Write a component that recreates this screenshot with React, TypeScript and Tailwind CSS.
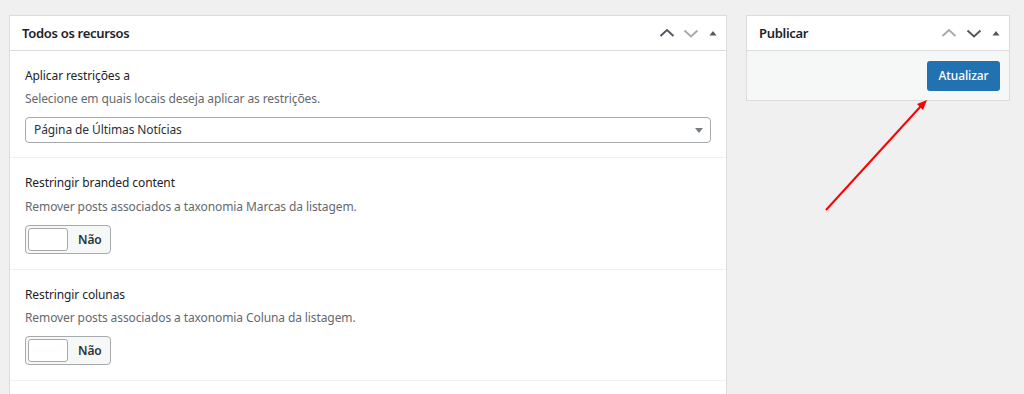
import React from "react";

const font = { fontFamily: '"Noto Sans", "Open Sans", Arial, sans-serif' };

function ChevUp({ color }: { color: string }) {
  return (
    <svg width="16" height="16" viewBox="0 0 16 16" className="block">
      <polyline points="1.5,11 8,5 14.5,11" fill="none" stroke={color} strokeWidth="1.9" />
    </svg>
  );
}
function ChevDown({ color }: { color: string }) {
  return (
    <svg width="16" height="16" viewBox="0 0 16 16" className="block">
      <polyline points="1.5,5.5 8,11.5 14.5,5.5" fill="none" stroke={color} strokeWidth="1.9" />
    </svg>
  );
}
function Tri() {
  return (
    <svg width="10" height="10" viewBox="0 0 10 10" className="block">
      <polygon points="1.5,7.5 5,3 8.5,7.5" fill="#50575e" />
    </svg>
  );
}

function Toggle() {
  return (
    <div className="mt-[8px] flex h-[29px] w-[86px] items-center rounded-[4px] border border-[#a7aaad] bg-[#f6f7f7] pl-[2px]">
      <div className="h-[23px] w-[40px] rounded-[3px] border border-[#a7aaad] bg-white" />
      <span className="ml-[10px] text-[12px] font-semibold text-[#2c3338]">Não</span>
    </div>
  );
}

export default function App() {
  return (
    <div className="relative h-[394px] w-[1024px] overflow-hidden bg-[#f0f0f1] tracking-[-0.1px]" style={font}>
      <div className="flex items-start pl-[9px] pt-[15px]">
        {/* Left panel */}
        <div className="w-[718px] border border-[#dcdcde] bg-white">
          <div className="flex h-[35px] items-center border-b border-[#dcdcde] pl-[12px] pr-[6px]">
            <h2 className="flex-1 pt-[2px] text-[13px] font-semibold tracking-[-0.3px] text-[#1d2327]">Todos os recursos</h2>
            <div className="flex items-center">
              <span className="mr-[8px]"><ChevUp color="#50575e" /></span>
              <span className="mr-[9px]"><ChevDown color="#a7aaad" /></span>
              <span className="mr-[2px]"><Tri /></span>
            </div>
          </div>
          <div className="border-b border-[#f0f0f1] px-[15px] pb-[14px] pt-[15px]">
            <div className="text-[12px] leading-[20px] text-[#1d2327]">Aplicar restrições a</div>
            <div className="mt-[3px] text-[12px] leading-[20px] text-[#646970]">Selecione em quais locais deseja aplicar as restrições.</div>
            <div className="mt-[8px] flex h-[26px] items-center rounded-[4px] border border-[#a7aaad] bg-white pl-[8px] pr-[6px]">
              <span className="flex-1 text-[12px] text-[#2c3338]">Página de Últimas Notícias</span>
              <svg width="10" height="10" viewBox="0 0 10 10">
                <polygon points="1,3 9,3 5,8" fill="#787c82" />
              </svg>
            </div>
          </div>
          <div className="border-b border-[#f0f0f1] px-[15px] pb-[15px] pt-[15px]">
            <div className="text-[12px] leading-[20px] text-[#1d2327]">Restringir branded content</div>
            <div className="mt-[4px] text-[12px] leading-[20px] text-[#646970]">Remover posts associados a taxonomia Marcas da listagem.</div>
            <Toggle />
          </div>
          <div className="border-b border-[#f0f0f1] px-[15px] pb-[15px] pt-[15px]">
            <div className="text-[12px] leading-[20px] text-[#1d2327]">Restringir colunas</div>
            <div className="mt-[3px] text-[12px] leading-[20px] text-[#646970]">Remover posts associados a taxonomia Coluna da listagem.</div>
            <Toggle />
          </div>
          <div className="h-[60px]" />
        </div>

        {/* Right panel */}
        <div className="ml-[19px] w-[264px] border border-[#dcdcde] bg-white">
          <div className="flex h-[35px] items-center border-b border-[#dcdcde] pl-[12px] pr-[6px]">
            <h2 className="flex-1 pt-[2px] text-[13px] font-semibold tracking-[-0.3px] text-[#1d2327]">Publicar</h2>
            <div className="flex items-center">
              <span className="mr-[9px]"><ChevUp color="#a7aaad" /></span>
              <span className="mr-[9px]"><ChevDown color="#50575e" /></span>
              <span className="mr-[2px]"><Tri /></span>
            </div>
          </div>
          <div className="flex h-[49px] items-center justify-end bg-[#f6f7f7] pr-[9px]">
            <button className="h-[30px] w-[73px] rounded-[3px] bg-[#2271b1] text-[12px] font-medium text-white">Atualizar</button>
          </div>
        </div>
      </div>

      <svg className="pointer-events-none absolute left-0 top-0" width="1024" height="394">
        <line x1="826" y1="210" x2="921" y2="106" stroke="#ff0000" strokeWidth="2" />
        <polygon points="927,100 917,104 923,110" fill="#ff0000" />
      </svg>
    </div>
  );
}
